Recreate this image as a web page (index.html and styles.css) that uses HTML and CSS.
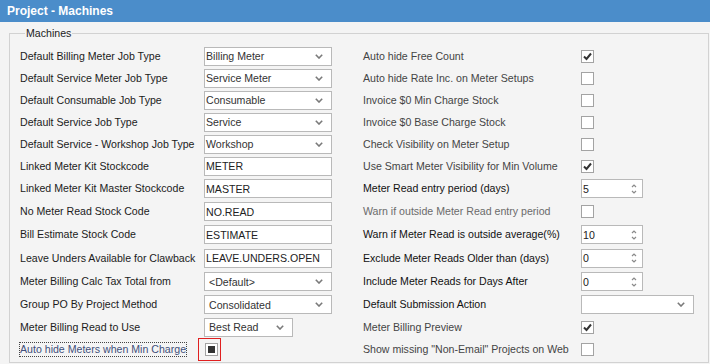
FILE: index.html
```html
<!DOCTYPE html>
<html lang="en">
<head>
    <meta charset="UTF-8">
    <title>Project - Machines</title>
    <link rel="stylesheet" href="styles.css">
</head>
<body>
    <header class="title-bar">Project - Machines</header>
    <div class="page">
        <fieldset class="group">
            <legend>Machines</legend>
            <div class="form-grid">
                <!-- row 1 -->
                <span class="lbl">Default Billing Meter Job Type</span>
                <div class="combo"><span>Billing Meter</span><svg class="arrow" viewBox="0 0 8 5"><polyline points="0.8,0.8 4,4 7.2,0.8"/></svg></div>
                <span class="lbl rlbl soft">Auto hide Free Count</span>
                <span class="chk on"><svg viewBox="0 0 11 11"><polyline points="2,5.5 4.5,8 9,2.5"/></svg></span>

                <!-- row 2 -->
                <span class="lbl">Default Service Meter Job Type</span>
                <div class="combo"><span>Service Meter</span><svg class="arrow" viewBox="0 0 8 5"><polyline points="0.8,0.8 4,4 7.2,0.8"/></svg></div>
                <span class="lbl rlbl soft">Auto hide Rate Inc. on Meter Setups</span>
                <span class="chk"></span>

                <!-- row 3 -->
                <span class="lbl">Default Consumable Job Type</span>
                <div class="combo"><span>Consumable</span><svg class="arrow" viewBox="0 0 8 5"><polyline points="0.8,0.8 4,4 7.2,0.8"/></svg></div>
                <span class="lbl rlbl soft">Invoice $0 Min Charge Stock</span>
                <span class="chk"></span>

                <!-- row 4 -->
                <span class="lbl">Default Service Job Type</span>
                <div class="combo"><span>Service</span><svg class="arrow" viewBox="0 0 8 5"><polyline points="0.8,0.8 4,4 7.2,0.8"/></svg></div>
                <span class="lbl rlbl soft">Invoice $0 Base Charge Stock</span>
                <span class="chk"></span>

                <!-- row 5 -->
                <span class="lbl">Default Service - Workshop Job Type</span>
                <div class="combo"><span>Workshop</span><svg class="arrow" viewBox="0 0 8 5"><polyline points="0.8,0.8 4,4 7.2,0.8"/></svg></div>
                <span class="lbl rlbl soft">Check Visibility on Meter Setup</span>
                <span class="chk"></span>

                <!-- row 6 -->
                <span class="lbl">Linked Meter Kit Stockcode</span>
                <div class="txt">METER</div>
                <span class="lbl rlbl soft">Use Smart Meter Visibility for Min Volume</span>
                <span class="chk on"><svg viewBox="0 0 11 11"><polyline points="2,5.5 4.5,8 9,2.5"/></svg></span>

                <!-- row 7 -->
                <span class="lbl">Linked Meter Kit Master Stockcode</span>
                <div class="txt">MASTER</div>
                <span class="lbl rlbl">Meter Read entry period (days)</span>
                <div class="spin"><span>5</span><svg class="spin-arrows" viewBox="0 0 6 12"><polyline points="1,4 3,2 5,4"/><polyline points="1,8 3,10 5,8"/></svg></div>

                <!-- row 8 -->
                <span class="lbl">No Meter Read Stock Code</span>
                <div class="txt">NO.READ</div>
                <span class="lbl rlbl faint">Warn if outside Meter Read entry period</span>
                <span class="chk"></span>

                <!-- row 9 -->
                <span class="lbl">Bill Estimate Stock Code</span>
                <div class="txt">ESTIMATE</div>
                <span class="lbl rlbl">Warn if Meter Read is outside average(%)</span>
                <div class="spin"><span>10</span><svg class="spin-arrows" viewBox="0 0 6 12"><polyline points="1,4 3,2 5,4"/><polyline points="1,8 3,10 5,8"/></svg></div>

                <!-- row 10 -->
                <span class="lbl">Leave Unders Available for Clawback</span>
                <div class="txt">LEAVE.UNDERS.OPEN</div>
                <span class="lbl rlbl">Exclude Meter Reads Older than (days)</span>
                <div class="spin"><span>0</span><svg class="spin-arrows" viewBox="0 0 6 12"><polyline points="1,4 3,2 5,4"/><polyline points="1,8 3,10 5,8"/></svg></div>

                <!-- row 11 -->
                <span class="lbl">Meter Billing Calc Tax Total from</span>
                <div class="combo wide-pad"><span>&lt;Default&gt;</span><svg class="arrow" viewBox="0 0 8 5"><polyline points="0.8,0.8 4,4 7.2,0.8"/></svg></div>
                <span class="lbl rlbl">Include Meter Reads for Days After</span>
                <div class="spin"><span>0</span><svg class="spin-arrows" viewBox="0 0 6 12"><polyline points="1,4 3,2 5,4"/><polyline points="1,8 3,10 5,8"/></svg></div>

                <!-- row 12 -->
                <span class="lbl">Group PO By Project Method</span>
                <div class="combo wide-pad"><span>Consolidated</span><svg class="arrow" viewBox="0 0 8 5"><polyline points="0.8,0.8 4,4 7.2,0.8"/></svg></div>
                <span class="lbl rlbl">Default Submission Action</span>
                <div class="combo action"><span></span><svg class="arrow" viewBox="0 0 8 5"><polyline points="0.8,0.8 4,4 7.2,0.8"/></svg></div>

                <!-- row 13 -->
                <span class="lbl">Meter Billing Read to Use</span>
                <div class="combo short wide-pad"><span>Best Read</span><svg class="arrow" viewBox="0 0 8 5"><polyline points="0.8,0.8 4,4 7.2,0.8"/></svg></div>
                <span class="lbl rlbl soft">Meter Billing Preview</span>
                <span class="chk on"><svg viewBox="0 0 11 11"><polyline points="2,5.5 4.5,8 9,2.5"/></svg></span>

                <!-- row 14 -->
                <span class="lbl"><span class="focused">Auto hide Meters when Min Charge</span></span>
                <div class="marked"><span class="chk mixed"><i></i></span></div>
                <span class="lbl rlbl soft">Show missing "Non-Email" Projects on Web</span>
                <span class="chk"></span>
            </div>
        </fieldset>
    </div>
</body>
</html>
```

FILE: styles.css
```css
body {
    margin: 0;
    padding: 0;
    background-color: #f4f4f4;
    font-family: "Liberation Sans", Arial, sans-serif;
    font-size: 10.6px;
    color: #1b1b1b;
}
.title-bar {
    background-color: #4b8dca;
    color: #fff;
    font-weight: bold;
    font-size: 12px;
    height: 22px;
    line-height: 23px;
    padding-left: 7px;
}
.page {
    padding: 5px 1px 0 9px;
}
.group {
    margin: 0;
    height: 336px;
    box-sizing: border-box;
    border: 1px solid #d2d2d2;
    padding: 5px 0 0 10px;
}
.group legend {
    padding: 0 1px;
    margin-left: 5px;
    line-height: 13px;
    font-size: 10.6px;
    color: #1b1b1b;
}
.form-grid {
    display: grid;
    grid-template-columns: 184px 128px 249px auto;
    grid-template-rows: repeat(6, 22px) repeat(3, 23px) 24px 23px 23px 22px 22px;
    align-items: center;
}
.lbl {
    white-space: nowrap;
    line-height: 13px;
}
.rlbl {
    padding-left: 31px;
    color: #111;
}
.rlbl.soft {
    color: #444;
}
.rlbl.faint {
    color: #6b6b6b;
}
.combo,
.txt,
.spin {
    height: 19px;
    box-sizing: border-box;
    border: 1px solid #b9b9b9;
    background-color: #fff;
    color: #333;
    display: flex;
    align-items: center;
    padding-left: 1px;
    white-space: nowrap;
}
.combo {
    justify-content: space-between;
    padding-right: 8px;
}
.combo.wide-pad {
    padding-left: 4px;
}
.combo.short {
    width: 89px;
}
.combo.action {
    width: 113px;
}
.txt {
    color: #222;
}
.arrow {
    width: 8px;
    height: 5px;
    fill: none;
    stroke: #7a7a7a;
    stroke-width: 1.6;
}
.spin {
    width: 62px;
    justify-content: space-between;
    padding-right: 5px;
    color: #222;
}
.spin-arrows {
    width: 6px;
    height: 12px;
    fill: none;
    stroke: #8a8a8a;
    stroke-width: 1.2;
}
.chk {
    width: 13px;
    height: 13px;
    box-sizing: border-box;
    border: 1px solid #a3a3a3;
    background-color: #fff;
    display: flex;
    align-items: center;
    justify-content: center;
}
.chk svg {
    width: 11px;
    height: 11px;
    fill: none;
    stroke: #333;
    stroke-width: 2;
}
.chk.mixed i {
    width: 7px;
    height: 7px;
    background-color: #333;
}
.focused {
    display: inline-block;
    border: 1px dotted #444;
    margin-left: -1px;
    color: #3f4f7a;
}
.marked {
    width: 23px;
    height: 23px;
    box-sizing: border-box;
    border: 1px solid #e02020;
    margin-left: -6px;
    display: flex;
    align-items: center;
    padding-left: 6px;
}
```
